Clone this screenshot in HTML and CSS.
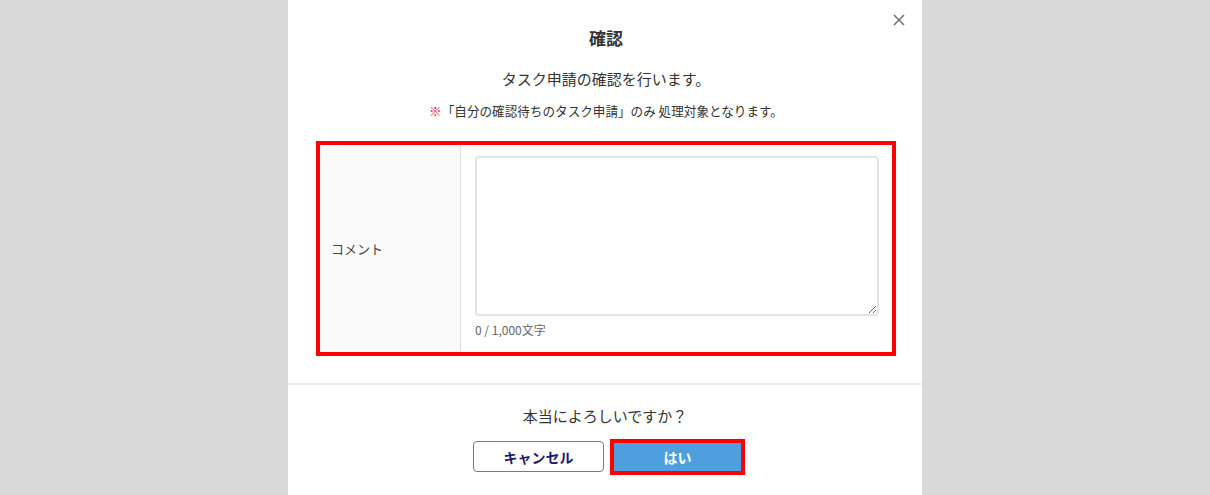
FILE: index.html
```html
<!DOCTYPE html>
<html lang="ja">
<head>
<meta charset="utf-8">
<title>確認</title>
<link rel="stylesheet" href="styles.css">
</head>
<body>
<div class="modal">
  <button class="close" aria-label="閉じる">
    <svg width="12" height="12" viewBox="0 0 12 12"><path d="M1 1 L11 11 M11 1 L1 11" stroke="#707070" stroke-width="1.5" fill="none"/></svg>
  </button>
  <div class="content">
    <h1 class="title">確認</h1>
    <p class="lead">タスク申請の確認を行います。</p>
    <p class="note"><span class="mark">※</span>「自分の確認待ちのタスク申請」のみ 処理対象となります。</p>
    <div class="form">
      <div class="label">コメント</div>
      <div class="field">
        <textarea class="textarea"></textarea>
        <div class="count">0 / 1,000文字</div>
      </div>
    </div>
  </div>
  <div class="footer">
    <p class="ask">本当によろしいですか？</p>
    <div class="buttons">
      <button class="btn cancel">キャンセル</button>
      <button class="btn ok">はい</button>
    </div>
  </div>
</div>
</body>
</html>
```

FILE: styles.css
```css
html, body {
  margin: 0;
  padding: 0;
  height: 100%;
}
body {
  background: #d9d9d9;
  font-family: "Noto Sans CJK JP", "Noto Sans", sans-serif;
  color: #333;
  display: flex;
  justify-content: center;
}
.modal {
  position: relative;
  width: 634px;
  height: 495px;
  background: #fff;
  box-sizing: border-box;
}
.close {
  position: absolute;
  top: 14px;
  right: 17px;
  width: 12px;
  height: 12px;
  padding: 0;
  border: 0;
  background: none;
  display: flex;
}
.content {
  padding: 27px 26px 0 28px;
  display: flex;
  flex-direction: column;
  align-items: center;
}
.title {
  margin: 0;
  font-size: 17px;
  line-height: 22px;
  font-weight: bold;
  color: #333;
}
.lead {
  margin: 19px 0 0;
  font-size: 15px;
  line-height: 22px;
}
.note {
  margin: 12px 0 0;
  font-size: 12.6px;
  line-height: 18px;
}
.mark {
  color: #e60012;
}
.form {
  margin-top: 21px;
  width: 580px;
  height: 215px;
  box-sizing: border-box;
  border: 4px solid #ff0000;
  display: flex;
  align-self: flex-start;
}
.label {
  width: 141px;
  box-sizing: border-box;
  background: #fafafa;
  border-right: 1px solid #dedede;
  display: flex;
  align-items: center;
  padding-left: 11px;
  font-size: 13px;
  color: #444;
}
.field {
  flex: 1;
  padding: 11px 13px 0 14px;
}
.textarea {
  display: block;
  width: 100%;
  height: 160px;
  box-sizing: border-box;
  border: 2px solid #e4e4e4;
  border-radius: 4px;
  resize: vertical;
  margin: 0;
}
.count {
  margin-top: 6px;
  font-size: 12px;
  line-height: 16px;
  color: #666;
}
.footer {
  margin-top: 27px;
  border-top: 2px solid #ededed;
  display: flex;
  flex-direction: column;
  align-items: center;
  padding-top: 20px;
}
.ask {
  margin: 0;
  font-size: 15px;
  line-height: 22px;
}
.buttons {
  margin-top: 14px;
  display: flex;
  align-items: center;
  gap: 10px;
  padding-left: 4px;
}
.btn {
  font-family: inherit;
  font-size: 14px;
  font-weight: bold;
  cursor: pointer;
}
.cancel {
  width: 131px;
  height: 31px;
  background: #fff;
  color: #1d1a6b;
  border: 1px solid #7674b0;
  border-radius: 4px;
}
.ok {
  width: 127px;
  height: 28px;
  background: #4f9fde;
  color: #fff;
  border: 0;
  border-radius: 0;
  outline: 4px solid #ff0000;
}
```
